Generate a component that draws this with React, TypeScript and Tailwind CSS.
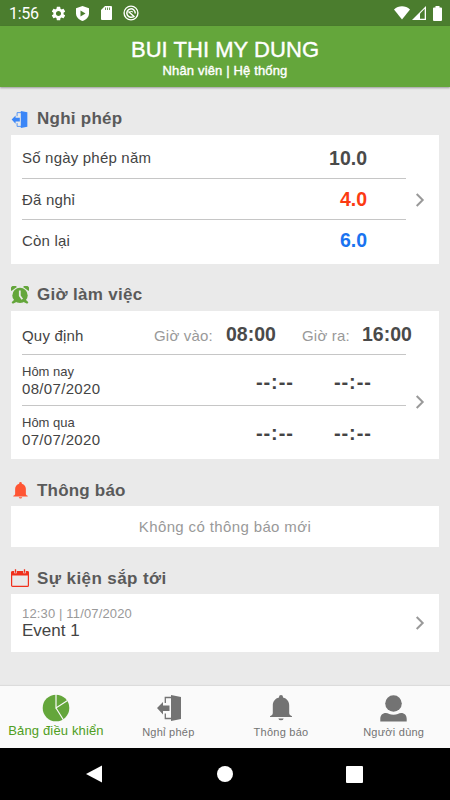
import React from 'react';
import { MdSettings } from 'react-icons/md';

interface IconProps {
  className?: string;
}

const DoorIcon: React.FC<IconProps> = ({ className }) => (
  <svg className={className} viewBox="0 0 24 26" fill="currentColor">
    <path d="M14 0l10 2v22l-10 2z" />
    <path d="M0 13L6 7v3.500h6.500v5.500H6v3.500z" />
    <path d="M8.300 8V2.500H15M8.300 18.500v5H15" fill="none" stroke="currentColor" strokeWidth="1.300" />
  </svg>
);

const BellIcon: React.FC<IconProps> = ({ className }) => (
  <svg className={className} viewBox="0 0 22 26" fill="currentColor">
    <path d="M11 0a2 2 0 0 1 2 2v.5c4 1 6.200 4 6.200 8V18c0 1.500 1 2.500 2.800 3.200v.8H0v-.8C1.800 20.500 2.800 19.500 2.800 18v-7.500c0-4 2.200-7 6.200-8V2a2 2 0 0 1 2-2z" />
    <path d="M8.300 23.500h5.400A2.800 2.500 0 0 1 8.300 23.500z" />
  </svg>
);

const AlarmIcon: React.FC<IconProps> = ({ className }) => (
  <svg className={className} viewBox="0 0 18 18" fill="currentColor">
    <path d="M.4 5A3.200 3.200 0 0 1 5.900 1zM17.600 5a3.200 3.200 0 0 0-5.500-4z" />
    <circle cx="9" cy="9.400" r="7.700" />
    <path d="M3.500 13.500L.6 16.300l1.200 1.400 4.200-1.900zM14.500 13.500l2.900 2.800-1.200 1.400-4.200-1.900z" />
    <path d="M8.800 4.500v5.300l2.500 3.500" fill="none" stroke="#eaeaea" strokeWidth="1.800" />
  </svg>
);

const CalendarIcon: React.FC<IconProps> = ({ className }) => (
  <svg className={className} viewBox="0 0 18 18">
    <rect x=".6" y="2.600" width="16.800" height="14.800" rx="1" fill="none" stroke="#f0301c" strokeWidth="1.200" />
    <path d="M.5 2.500h17v4H.5z" fill="#f0301c" />
    <path d="M4.500 0v4.300M13.500 0v4.300" stroke="#eaeaea" strokeWidth="2.600" />
    <path d="M4.500 .3v3.400M13.500 .3v3.400" stroke="#f0301c" strokeWidth="1.300" />
  </svg>
);

const PieIcon: React.FC<IconProps> = ({ className }) => (
  <svg className={className} viewBox="0 0 28 28">
    <circle cx="14" cy="14" r="13.300" fill="#64a63b" />
    <path d="M14 0v14l11.500-7.500M14 14l7.500 12" fill="none" stroke="#fafafa" strokeWidth="1.200" />
  </svg>
);

const UserIcon: React.FC<IconProps> = ({ className }) => (
  <svg className={className} viewBox="0 0 27 27" fill="currentColor">
    <circle cx="13.500" cy="8.500" r="8.300" />
    <path d="M.3 26.500V24c0-3.800 2.200-6 5.500-6 2.500 0 4 1.800 7.700 1.800s5.200-1.800 7.700-1.800c3.300 0 5.500 2.200 5.500 6v2.500z" />
  </svg>
);

const Chevron = () => (
  <svg className="h-3.5 w-2.5" viewBox="0 0 10 14" fill="none" stroke="#999" strokeWidth="2">
    <path d="M1.700 1l6 6-6 6" />
  </svg>
);

const StatusBar = () => (
  <div className="flex h-[26px] items-center justify-between bg-[#4b7d2e] pl-[9px] pr-2 text-white">
    <div className="flex items-center">
      <span className="w-[41px] pt-0.5 font-[Roboto] text-base leading-none tracking-[-0.3px]">1:56</span>
      <MdSettings className="h-[17px] w-[17px]" />
      <svg className="ml-[9px] h-[15px] w-[13px]" viewBox="0 0 13 15">
        <path d="M6.500 0L13 2.300v5C13 11 10.300 14 6.500 15 2.700 14 0 11 0 7.300v-5z" fill="#fff" />
        <path d="M4.500 4.500v6l5-3z" fill="#4b7d2e" />
      </svg>
      <svg className="ml-3 h-3.5 w-[11px]" viewBox="0 0 11 14">
        <path d="M4 0h6a1 1 0 0 1 1 1v12a1 1 0 0 1-1 1H1a1 1 0 0 1-1-1V4z" fill="#fff" />
        <path d="M4.500 1.500v2.500M6.500 1.500v2.500M8.500 1.500v2.500" stroke="#4b7d2e" strokeWidth=".8" />
      </svg>
      <svg className="ml-[11px] h-4 w-4" viewBox="0 0 16 16" fill="none" stroke="#fff">
        <circle cx="8" cy="8" r="6.900" strokeWidth="1.400" />
        <path d="M10.800 11.200A4.200 4.200 0 1 1 12.200 8.500M5.500 6.500l6 5.500" strokeWidth="1.500" />
        <path d="M6 8.200a2.300 2.300 0 0 1 4-1" strokeWidth="1" />
      </svg>
    </div>
    <div className="flex items-center">
      <svg className="h-3.5 w-4" viewBox="0 0 16 14" fill="#fff">
        <path d="M0 3.500C4.500-.8 11.500-.8 16 3.500L8 13.500z" />
      </svg>
      <svg className="ml-0.5 h-3.5 w-3.5" viewBox="0 0 14 14">
        <path d="M14 0v14H0z" fill="#fff" />
        <path d="M8 7.500l4.700-4.700v9.900H8z" fill="#4b7d2e" />
      </svg>
      <svg className="ml-[7px] h-[15px] w-[9px]" viewBox="0 0 9 15" fill="#fff">
        <path d="M2.500 0h4v1.500H8a1 1 0 0 1 1 1V14a1 1 0 0 1-1 1H1a1 1 0 0 1-1-1V2.500a1 1 0 0 1 1-1h1.500z" />
      </svg>
    </div>
  </div>
);

interface SectionProps {
  icon: React.ReactNode;
  title: string;
  titleClassName: string;
  className: string;
  children: React.ReactNode;
}

const Section: React.FC<SectionProps> = ({ icon, title, titleClassName, className, children }) => (
  <section className={className}>
    <h2 className="flex h-8 items-center">
      <span className="flex w-[26px] items-center">{icon}</span>
      <span className={`text-[17px] font-bold leading-8 text-[#5a5a5a] ${titleClassName}`}>{title}</span>
    </h2>
    {children}
  </section>
);

const leaveRows = [
  { label: 'Số ngày phép năm', value: '10.0', color: 'text-[#4a4a4a]', row: 'h-[43px] pt-1' },
  { label: 'Đã nghỉ', value: '4.0', color: 'text-[#fc3a12]', row: 'h-[41px] pt-0.5 border-t border-[#c6c6c6]' },
  { label: 'Còn lại', value: '6.0', color: 'text-[#1a73f0]', row: 'h-[45px] pb-0.5 border-t border-[#c6c6c6]' },
];

const days = [
  { label: 'Hôm nay', date: '08/07/2020' },
  { label: 'Hôm qua', date: '07/07/2020' },
];

const tabs = [
  { label: 'Nghỉ phép', icon: <DoorIcon className="h-[26px] w-6 translate-x-px" /> },
  { label: 'Thông báo', icon: <BellIcon className="h-[26px] w-[22px]" /> },
  { label: 'Người dùng', icon: <UserIcon className="h-[27px] w-[27px]" /> },
];

export default function App() {
  return (
    <div className="flex h-[800px] w-[450px] flex-col overflow-hidden bg-[#eaeaea] font-['Liberation_Sans',sans-serif] text-[#444]">
      <StatusBar />
      <header className="flex h-[61px] flex-col items-center bg-[#64a63b] pt-3 text-white shadow-[0_1px_2px_rgba(0,0,0,0.35)]">
        <h1 className="text-[22px] leading-6 tracking-[0.05px] [-webkit-text-stroke:0.4px_white]">BUI THI MY DUNG</h1>
        <p className="text-[13px] leading-[17px] tracking-[0.15px] [-webkit-text-stroke:0.4px_white]">
          Nhân viên | Hệ thống
        </p>
      </header>

      <main className="flex-1 px-[11px]">
        <Section
          className="mt-4"
          icon={<DoorIcon className="h-[17px] w-[17px] text-[#3b86f7]" />}
          title="Nghỉ phép"
          titleClassName="tracking-[0.25px]"
        >
          <div className="flex h-[129px] items-center bg-white pl-[11px]">
            <div className="w-96">
              {leaveRows.map((item) => (
                <div key={item.label} className={`flex items-center justify-between pr-[39px] ${item.row}`}>
                  <span className="text-[15px] tracking-[0.2px]">{item.label}</span>
                  <span className={`text-[19.5px] font-bold ${item.color}`}>{item.value}</span>
                </div>
              ))}
            </div>
            <div className="ml-[9px]">
              <Chevron />
            </div>
          </div>
        </Section>

        <Section
          className="mt-[15px]"
          icon={<AlarmIcon className="h-[18px] w-[18px] text-[#64a63b]" />}
          title="Giờ làm việc"
          titleClassName="tracking-[0.3px]"
        >
          <div className="h-[148px] bg-white pl-[11px]">
            <div className="flex h-[43px] items-center pt-1.5 text-[15px] tracking-[0.2px]">
              <span className="w-[132px] pt-0.5">Quy định</span>
              <span className="w-[72px] pt-0.5 text-[#999]">Giờ vào:</span>
              <span className="w-[76px] pb-0.5 text-[19.5px] font-bold tracking-normal text-[#4a4a4a]">08:00</span>
              <span className="w-[60px] pt-0.5 text-[#999]">Giờ ra:</span>
              <span className="pb-0.5 text-[19.5px] font-bold tracking-normal text-[#4a4a4a]">16:00</span>
            </div>
            <div className="flex items-center">
              <div className="w-96">
                {days.map((day) => (
                  <div key={day.label} className="flex h-[51px] items-center border-t border-[#c6c6c6]">
                    <div className="w-[234px]">
                      <p className="text-[13px] leading-4">{day.label}</p>
                      <p className="text-[15px] leading-[17px] tracking-[0.33px]">{day.date}</p>
                    </div>
                    <span className="w-[78px] pt-1 text-xl font-bold tracking-[0.9px]">--:--</span>
                    <span className="pt-1 text-xl font-bold tracking-[0.9px]">--:--</span>
                  </div>
                ))}
              </div>
              <div className="mb-[7px] ml-[9px]">
                <Chevron />
              </div>
            </div>
          </div>
        </Section>

        <Section
          className="mt-[15px]"
          icon={<BellIcon className="ml-0.5 h-[17px] w-[15px] text-[#ff5533]" />}
          title="Thông báo"
          titleClassName="pt-0.5 tracking-[0.2px]"
        >
          <div className="flex h-[41px] items-center justify-center bg-white pt-0.5 text-[15px] tracking-[0.37px] text-[#999]">
            Không có thông báo mới
          </div>
        </Section>

        <Section
          className="mt-[15px]"
          icon={<CalendarIcon className="h-[18px] w-[18px]" />}
          title="Sự kiện sắp tới"
          titleClassName="pt-0.5 tracking-[0.4px]"
        >
          <div className="flex h-[58px] items-center bg-white pl-[11px]">
            <div className="w-[393px]">
              <p className="text-[13px] leading-4 tracking-[0.15px] text-[#999]">12:30 | 11/07/2020</p>
              <p className="text-[17px] leading-[18px]">Event 1</p>
            </div>
            <Chevron />
          </div>
        </Section>
      </main>

      <nav className="flex h-[62px] bg-[#fafafa] shadow-[0_-1px_1px_rgba(0,0,0,0.06)]">
        <div className="flex w-28 flex-col items-center pt-2 text-[#4f9e22]">
          <PieIcon className="h-7 w-7" />
          <span className="pt-px text-[13px] leading-4 tracking-[0.15px]">Bảng điều khiển</span>
        </div>
        {tabs.map((tab) => (
          <div key={tab.label} className="flex flex-1 flex-col items-center pt-2 text-[#737373]">
            <span className="flex h-7 items-center">{tab.icon}</span>
            <span className="pt-px text-[11px] leading-[18px] tracking-[0.25px]">{tab.label}</span>
          </div>
        ))}
      </nav>

      <div className="flex h-[52px] items-center bg-black">
        <svg className="ml-[86px] h-[18px] w-4" viewBox="0 0 16 18" fill="#fff">
          <path d="M16 .5v17L0 9z" />
        </svg>
        <div className="ml-[115px] h-4 w-4 rounded-full bg-white" />
        <div className="ml-[113px] h-[17px] w-[17px] rounded-[1px] bg-white" />
      </div>
    </div>
  );
}
